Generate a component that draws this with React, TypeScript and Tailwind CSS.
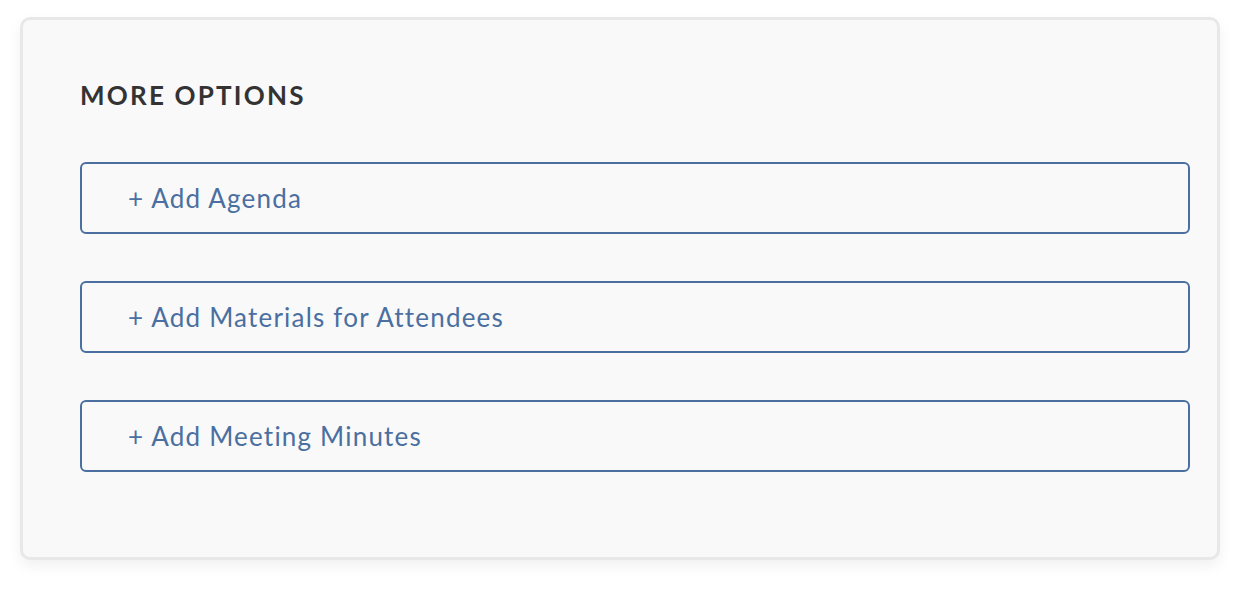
const items = ['Add Agenda', 'Add Materials for Attendees', 'Add Meeting Minutes'];

export default function App() {
    return (
        <div className="min-h-[591px] w-[1247px] bg-white pt-[17px] pl-[20px]" style={{ fontFamily: 'Lato, "Open Sans", sans-serif' }}>
            <div className="w-[1200px] h-[543px] rounded-[10px] border-[3px] border-[#e8e8e8] bg-[#f9f9f9] shadow-[0_6px_14px_rgba(0,0,0,0.06)] pt-[60px] px-[57px]">
                <h2 className="text-[26px] leading-[30px] font-bold tracking-[2.2px] text-[#333333]">MORE OPTIONS</h2>
                <div className="mt-[52px] flex flex-col gap-[47px]">
                    {items.map(label => (
                        <button
                            key={label}
                            className="h-[72px] w-[1110px] rounded-[6px] border-2 border-[#4a6fa0] bg-transparent pl-[46px] text-left text-[26px] tracking-[1.2px] text-[#4a6fa0]"
                        >
                            + {label}
                        </button>
                    ))}
                </div>
            </div>
        </div>
    );
}
